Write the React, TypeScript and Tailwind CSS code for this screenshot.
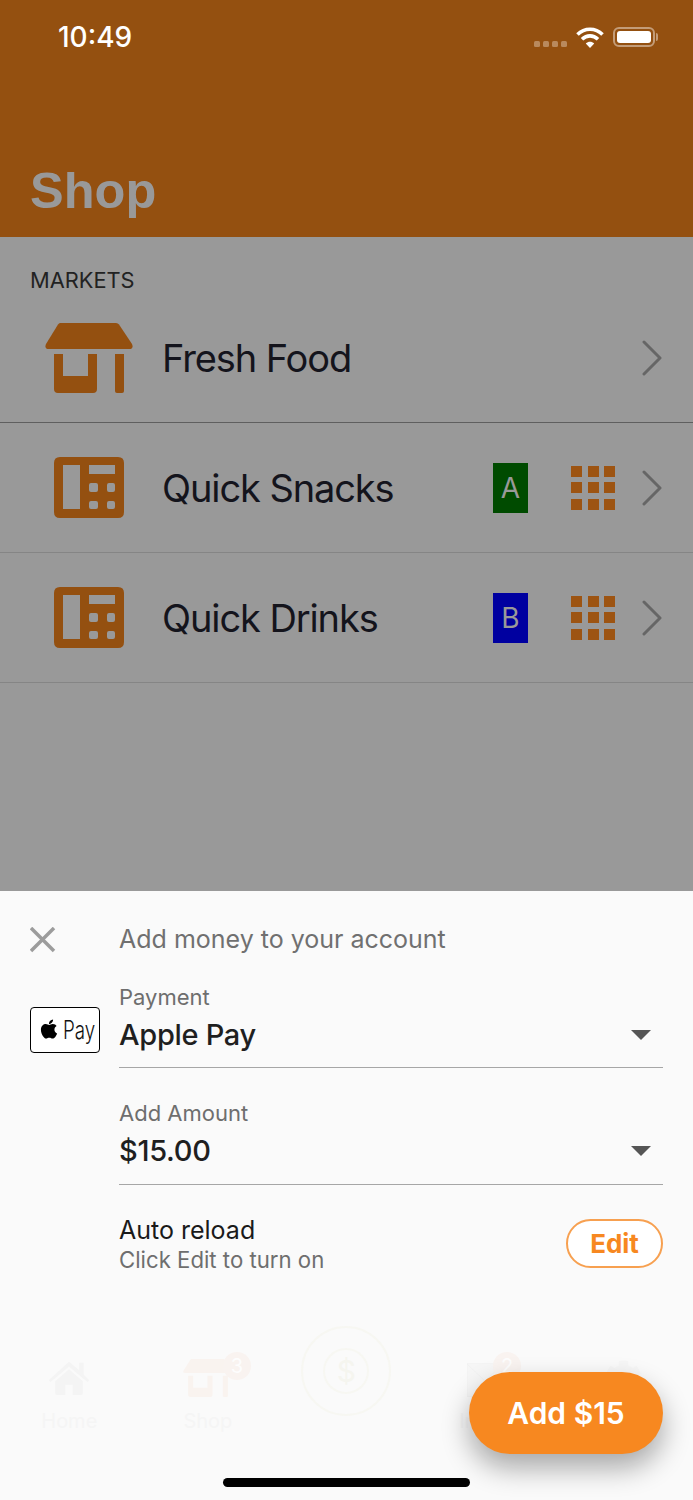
import { FaApple, FaCog } from 'react-icons/fa'

const rows = [
  { label: 'Fresh Food', icon: 'store', line: 'border-[#5f5f5f]' },
  { label: 'Quick Snacks', icon: 'calc', badge: 'A', badgeBg: 'bg-[#004b00]', line: 'border-[#858585]' },
  { label: 'Quick Drinks', icon: 'calc', badge: 'B', badgeBg: 'bg-[#0000a0]', line: 'border-[#858585]' },
]

function StoreIcon() {
  return (
    <svg width="88" height="70" viewBox="0 0 88 70" fill="#945010">
      <path d="M15 0H71Q73 0 74 1.500L87 21Q89 26 84 26H4Q-1 26 1 21L13 1.500Q14 0 15 0Z" />
      <path d="M9 31H18V53H43V31H52V66Q52 70 48 70H13Q9 70 9 66Z" />
      <path d="M70 31H79V68Q79 70 77 70H72Q70 70 70 68Z" />
    </svg>
  )
}

function CalcIcon() {
  return (
    <svg width="70" height="61" viewBox="0 0 70 61">
      <path
        fill="#945010"
        fillRule="evenodd"
        d="M6 0H64Q70 0 70 6V55Q70 61 64 61H6Q0 61 0 55V6Q0 0 6 0ZM9 8V52H26V8ZM35 8V17H61V8ZM37 26Q35 26 35 28V33Q35 35 37 35H42Q44 35 44 33V28Q44 26 42 26ZM55 26Q53 26 53 28V33Q53 35 55 35H59Q61 35 61 33V28Q61 26 59 26ZM37 44Q35 44 35 46V50Q35 52 37 52H42Q44 52 44 50V46Q44 44 42 44ZM55 44Q53 44 53 46V50Q53 52 55 52H59Q61 52 61 50V46Q61 44 59 44Z"
      />
    </svg>
  )
}

function Chevron() {
  return (
    <svg width="22" height="36" viewBox="0 0 22 36" fill="none" stroke="#666666" strokeWidth="3" strokeLinecap="round" strokeLinejoin="round">
      <path d="M3 2L19 18L3 34" />
    </svg>
  )
}

function Caret() {
  return (
    <svg width="20" height="10" viewBox="0 0 20 10" fill="#555555">
      <path d="M0 0H20L10 10Z" />
    </svg>
  )
}

function StatusBar() {
  return (
    <div className="flex items-center justify-between h-[74px] pl-[58px] pr-[35px]">
      <span className="text-[28px] font-medium text-white font-['Inter',sans-serif]">10:49</span>
      <div className="flex items-center">
        <div className="flex gap-[3px] mt-[14px] mr-[9px]">
          {[0, 1, 2, 3].map((i) => (
            <span key={i} className="w-[6px] h-[6px] rounded-[1.500px] bg-[#b98a5e]" />
          ))}
        </div>
        <svg width="28" height="21" viewBox="0 0 28 21" fill="none" stroke="#ffffff" strokeWidth="3.600">
          <path d="M1.500 7.500C8.500 0.500 19.500 0.500 26.500 7.500" />
          <path d="M6 12.200C10.800 7.700 17.200 7.700 22 12.200" />
          <path d="M14 21L9.800 16.500C12.300 14.300 15.700 14.300 18.200 16.500Z" fill="#ffffff" stroke="none" />
        </svg>
        <div className="flex items-center ml-[9px]">
          <div className="w-[42px] h-[20px] rounded-[6px] border-2 border-[#c39c78] p-[2px]">
            <div className="w-full h-full rounded-[3px] bg-white" />
          </div>
          <div className="w-[2px] h-[8px] rounded-r-full bg-[#c39c78] ml-[1px]" />
        </div>
      </div>
    </div>
  )
}

function FadedTabBar() {
  return (
    <div className="absolute left-0 right-0 top-[435px] grid grid-cols-5 text-[20px] leading-[24px] text-[#f5f5f5]">
      {/* Home */}
      <div className="flex flex-col items-center">
        <div className="h-[71px] flex items-end pb-[2px]">
          <svg width="44" height="35" viewBox="0 0 44 38" fill="#f4f4f4">
            <path d="M22 2L33 11V3H38V16L44 22L42 24L22 7L2 24L0 22Z" />
            <path d="M7 23L22 10L37 23V36Q37 38 35 38H26V27H18V38H9Q7 38 7 36Z" />
          </svg>
        </div>
        <span className="mt-[12px]">Home</span>
      </div>

      {/* Shop */}
      <div className="flex flex-col items-center">
        <div className="h-[71px] flex items-end">
          <div className="relative">
            <svg width="50" height="38" viewBox="0 0 88 70" preserveAspectRatio="none" fill="#f9f3ef">
              <path d="M15 0H71Q73 0 74 1.500L87 21Q89 26 84 26H4Q-1 26 1 21L13 1.500Q14 0 15 0Z" />
              <path d="M9 31H18V53H43V31H52V66Q52 70 48 70H13Q9 70 9 66Z" />
              <path d="M70 31H79V68Q79 70 77 70H72Q70 70 70 68Z" />
            </svg>
            <div className="absolute left-[40px] top-[-7px] w-[28px] h-[28px] rounded-full bg-[#f9f3f0] flex items-center justify-center text-[#fdfdfd]">3</div>
          </div>
        </div>
        <span className="mt-[12px]">Shop</span>
      </div>

      {/* Add money */}
      <div className="flex justify-center items-start">
        <div className="w-[90px] h-[90px] rounded-full border-2 border-[#f7f7f2] flex items-center justify-center">
          <div className="w-[46px] h-[46px] rounded-full border-2 border-[#f7f7f2] flex items-center justify-center text-[30px] text-[#f5f5ef]">$</div>
        </div>
      </div>

      {/* Inbox */}
      <div className="flex flex-col items-center">
        <div className="h-[71px] flex items-end">
          <div className="relative">
            <svg width="36" height="34" viewBox="0 0 36 34" fill="#f6f6f6" stroke="#f1f1f1" strokeWidth="1">
              <path d="M0 0H36V34H0Z" />
              <path d="M0 1L18 18L36 1" fill="none" />
            </svg>
            <div className="absolute left-[26px] top-[-11px] w-[28px] h-[28px] rounded-full bg-[#f9f3f0] flex items-center justify-center text-[#fdfdfd]">2</div>
          </div>
        </div>
        <span className="mt-[12px]">Inbox</span>
      </div>

      {/* More */}
      <div className="flex flex-col items-center">
        <div className="h-[71px] flex items-end">
          <FaCog className="text-[37px] text-[#f6f6f6]" />
        </div>
      </div>
    </div>
  )
}

function ApplePayMark() {
  return (
    <div className="w-[70px] h-[46px] rounded-[4px] border border-black bg-white flex items-center pl-[7px] gap-[3px]">
      <FaApple className="text-[22px] text-black mb-[2px]" />
      <span className="w-[32px] origin-left scale-x-[0.75] text-[25px] leading-none text-[#111] font-light">Pay</span>
    </div>
  )
}

function Field({ label, value, className }: { label: string; value: string; className: string }) {
  return (
    <div className={`border-b border-[#a6a6a6] flex flex-col ${className}`}>
      <span className="text-[22px] leading-[25px] text-[#6e6e6e]">{label}</span>
      <div className="flex items-center justify-between pr-[12px] mt-[7px]">
        <span className="text-[29px] leading-[36px] tracking-[-0.3px] font-medium text-[#1f1f1f]">{value}</span>
        <Caret />
      </div>
    </div>
  )
}

export default function App() {
  return (
    <div className="relative w-[693px] h-[1500px] overflow-hidden flex flex-col bg-[#999999] font-['Inter',sans-serif]">
      {/* Header */}
      <header className="h-[237px] bg-[#945010] flex flex-col">
        <StatusBar />
        <h1 className="mt-[87px] pl-[30px] text-[50.500px] leading-[60px] font-bold text-[#999999] font-['Liberation_Sans',sans-serif]">Shop</h1>
      </header>

      {/* Market list */}
      <main className="flex-1">
        <div className="h-[56px] pl-[30px] pt-[29px] text-[21.800px] leading-[28px] text-[#222222]">MARKETS</div>
        {rows.map((row) => (
          <div key={row.label} className={`h-[130px] flex items-center border-b ${row.line} pr-[30px]`}>
            <div className="w-[162px] pl-[45px] shrink-0">
              <div className="w-[88px] flex justify-center">
                {row.icon === 'store' ? <StoreIcon /> : <CalcIcon />}
              </div>
            </div>
            <span className="flex-1 pt-[2px] text-[38px] tracking-[-1.100px] text-[#14141c]">{row.label}</span>
            {row.badge && (
              <div className={`w-[35px] h-[50px] flex items-center justify-center text-[28px] text-[#999999] ${row.badgeBg} mr-[43px]`}>
                {row.badge}
              </div>
            )}
            {row.badge && (
              <div className="grid grid-cols-3 gap-[5.500px] mr-[26px]">
                {Array.from({ length: 9 }).map((_, i) => (
                  <span key={i} className="w-[11px] h-[11px] bg-[#9d5412]" />
                ))}
              </div>
            )}
            <Chevron />
          </div>
        ))}
      </main>

      {/* Add money sheet */}
      <section className="relative h-[609px] bg-[#fafafa] px-[30px]">
        <FadedTabBar />
        <div className="relative flex items-center h-[94px] pt-[3px]">
          <svg className="shrink-0" width="89" height="26" viewBox="0 0 89 26" fill="none" stroke="#9c9c9c" strokeWidth="3.500">
            <path d="M1 1L24 24M24 1L1 24" />
          </svg>
          <span className="text-[25px] text-[#707070]">Add money to your account</span>
        </div>
        <div className="relative flex">
          <div className="w-[89px] shrink-0 pt-[22px]">
            <ApplePayMark />
          </div>
          <div className="flex-1 flex flex-col">
            <Field label="Payment" value="Apple Pay" className="h-[83px] mb-[33px]" />
            <Field label="Add Amount" value="$15.00" className="h-[84px] mb-[30px]" />
            <div className="flex items-start justify-between">
              <div className="flex flex-col">
                <span className="text-[25px] leading-[30px] text-[#1a1a1a]">Auto reload</span>
                <span className="text-[22.200px] leading-[30px] text-[#6e6e6e]">Click Edit to turn on</span>
              </div>
              <button className="mt-[4px] w-[97px] h-[49px] rounded-full border-2 border-[#f7a050] bg-white text-[26px] font-bold text-[#f78820]">Edit</button>
            </div>
          </div>
        </div>
      </section>

      {/* Overlays */}
      <button className="absolute left-[469px] top-[1372px] w-[194px] h-[82px] rounded-full bg-[#f78820] text-white text-[30px] font-semibold shadow-[0_14px_28px_rgba(0,0,0,0.33)]">Add $15</button>
      <div className="absolute left-[223px] top-[1478px] w-[247px] h-[9px] rounded-full bg-black" />
    </div>
  )
}
